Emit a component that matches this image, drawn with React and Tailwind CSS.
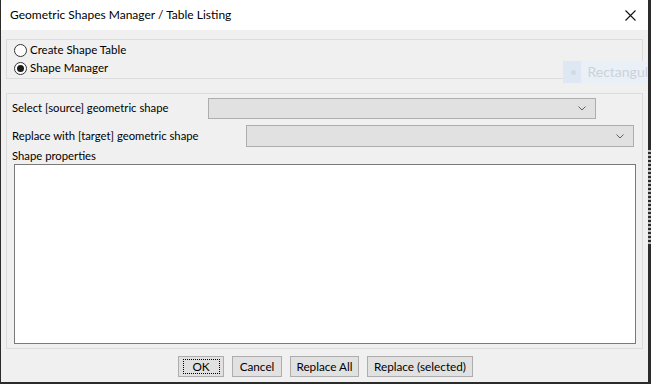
import React from "react"

const font = { fontFamily: 'Lato, "Noto Sans", sans-serif' }

const Radio = ({ checked, label }) => (
  <label className="flex items-center h-[18px] text-[11.5px] text-black">
    <svg width="13" height="13" viewBox="0 0 13 13" className="mr-[3px]">
      <circle cx="6.5" cy="6.5" r="6" fill="#ffffff" stroke="#333333" strokeWidth="1" />
      {checked && <circle cx="6.5" cy="6.5" r="3.5" fill="#1a1a1a" />}
    </svg>
    <span>{label}</span>
  </label>
)

const Combo = () => (
  <div className="h-full w-[388px] bg-[#e1e1e1] border border-[#adadad] flex items-center justify-end pr-[9px]">
    <svg width="8" height="5" viewBox="0 0 8 5">
      <path d="M0.5 0.5 L4 4 L7.5 0.5" fill="none" stroke="#606060" strokeWidth="1" />
    </svg>
  </div>
)

const Button = ({ children, width, focused }) => (
  <button
    className={`h-[21px] bg-[#e1e1e1] border border-[#adadad] text-[11.75px] text-black flex items-center justify-center whitespace-nowrap ${width}`}
  >
    <span
      className={`flex items-center justify-center h-[15px] ${focused ? "border border-dotted border-black w-[37px]" : ""}`}
    >
      {children}
    </span>
  </button>
)

const SideDashes = () => (
  <svg width="3" height="96" viewBox="0 0 3 96" className="mt-[150px]">
    {Array.from({ length: 24 }).map((_, i) => (
      <rect key={i} x="0" y={i * 4} width="3" height="2" fill="#bdbdbd" />
    ))}
  </svg>
)

export default function App() {
  return (
    <div className="w-[651px] h-[384px] bg-[#2b2b2b] flex overflow-hidden" style={font}>
      <div className="ml-[1px] w-[647px] h-[382px] flex flex-col relative">
        <div className="h-[30px] bg-white flex items-center justify-between pl-[9px] pr-[12px]">
          <span className="text-[12px] text-black">Geometric Shapes Manager / Table Listing</span>
          <svg width="11" height="11" viewBox="0 0 11 11">
            <path d="M0.5 0.5 L10.5 10.5 M10.5 0.5 L0.5 10.5" stroke="#111111" strokeWidth="1.1" />
          </svg>
        </div>

        <div className="flex-1 bg-[#f0f0f0] flex flex-col">
          <div className="ml-[5px] mt-[9px] w-[637px] h-[40px] border border-[#dcdcdc] flex flex-col justify-center pl-[7px]">
            <Radio label="Create Shape Table" />
            <Radio label="Shape Manager" checked />
          </div>

          <div className="ml-[5px] mt-[14px] w-[637px] h-[256px] border border-[#dcdcdc] flex flex-col text-[11.3px] text-black">
            <div className="mt-[4px] h-[21px] flex items-center">
              <span className="w-[201px] pl-[5px]">Select [source] geometric shape</span>
              <Combo />
            </div>
            <div className="mt-[6px] h-[22px] flex items-center">
              <span className="w-[239px] pl-[5px]">Replace with [target] geometric shape</span>
              <Combo />
            </div>
            <div className="h-[17px] flex items-center pt-[2px] pl-[5px]">Shape properties</div>
            <div className="ml-[7px] w-[622px] h-[180px] bg-white border border-[#7a7a7a]" />
          </div>

          <div className="mt-[7px] flex justify-center gap-[8px] pl-[2px]">
            <Button width="w-[46px]" focused>OK</Button>
            <Button width="w-[50px]">Cancel</Button>
            <Button width="w-[69px]">Replace All</Button>
            <Button width="w-[106px]">Replace (selected)</Button>
          </div>
        </div>

        <div className="absolute left-[562px] top-[61px] w-[85px] h-[22px] flex bg-[#e8eff7]/90">
          <div className="w-[27px] h-full bg-[#dde8f4] flex items-center pl-[8px]">
            <div className="w-[5px] h-[5px] rounded-full bg-[#d4d9df]" />
          </div>
          <span className="pl-[6px] text-[14px] leading-[22px] text-[#cdd2d8] whitespace-nowrap">Rectangul</span>
        </div>
      </div>
      <div className="w-[3px] flex flex-col">
        <SideDashes />
      </div>
    </div>
  )
}
